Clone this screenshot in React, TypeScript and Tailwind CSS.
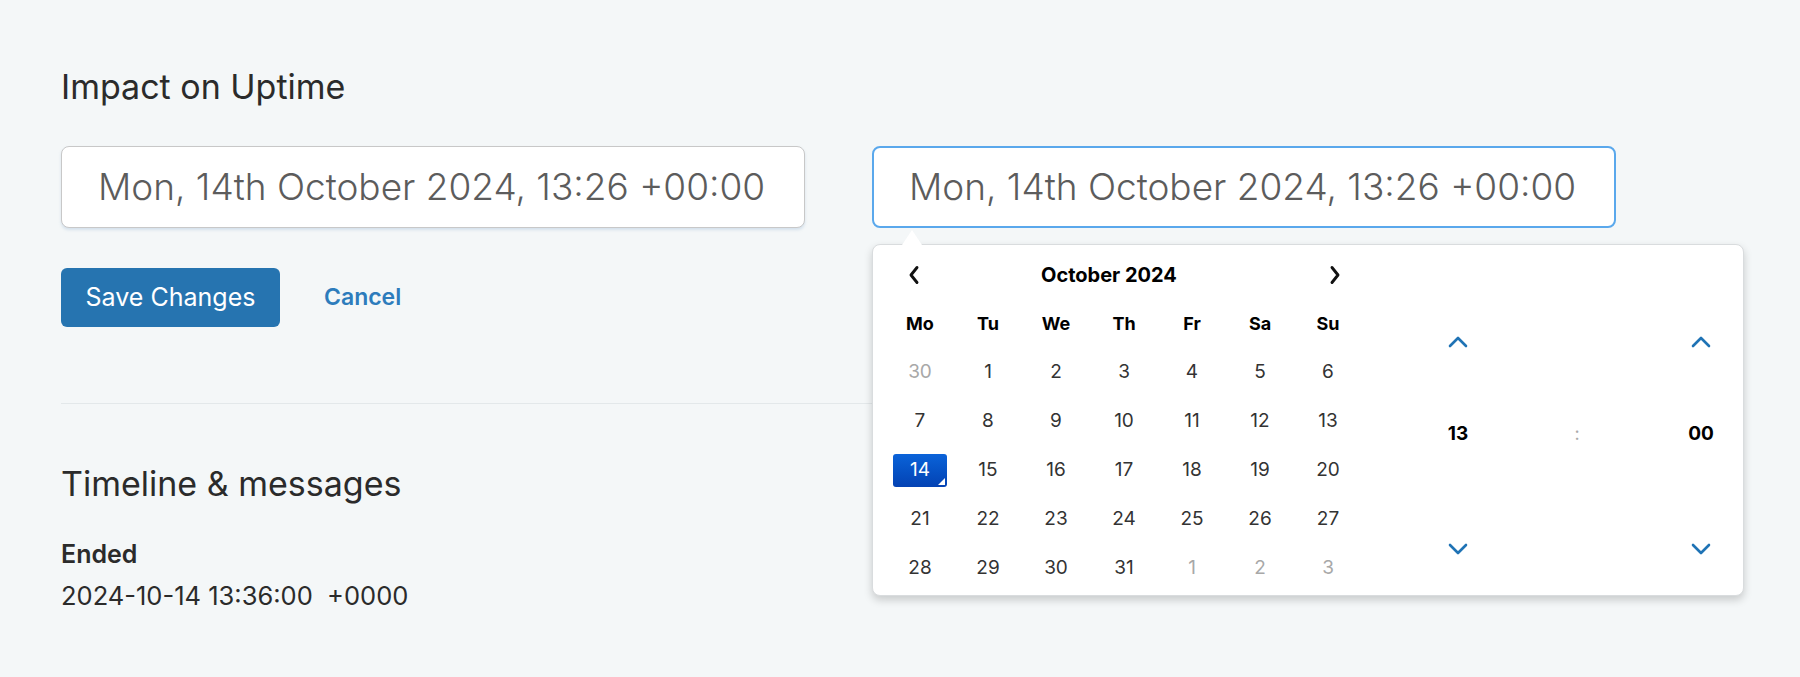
const weekdays = ["Mo", "Tu", "We", "Th", "Fr", "Sa", "Su"];

type Day = { n: number; muted?: boolean; selected?: boolean };

const weeks: Day[][] = [
  [{ n: 30, muted: true }, { n: 1 }, { n: 2 }, { n: 3 }, { n: 4 }, { n: 5 }, { n: 6 }],
  [{ n: 7 }, { n: 8 }, { n: 9 }, { n: 10 }, { n: 11 }, { n: 12 }, { n: 13 }],
  [{ n: 14, selected: true }, { n: 15 }, { n: 16 }, { n: 17 }, { n: 18 }, { n: 19 }, { n: 20 }],
  [{ n: 21 }, { n: 22 }, { n: 23 }, { n: 24 }, { n: 25 }, { n: 26 }, { n: 27 }],
  [{ n: 28 }, { n: 29 }, { n: 30 }, { n: 31 }, { n: 1, muted: true }, { n: 2, muted: true }, { n: 3, muted: true }],
];

const VALUE = "Mon, 14th October 2024, 13:26 +00:00";

function NavChevron({ dir }: { dir: "left" | "right" }) {
  return (
    <svg width="12" height="20" viewBox="0 0 12 20" fill="none">
      <path
        d={dir === "left" ? "M9 2.5 L3 10 L9 17.5" : "M3 2.5 L9 10 L3 17.5"}
        stroke="#111"
        strokeWidth="2.9"
        strokeLinecap="round"
        strokeLinejoin="round"
      />
    </svg>
  );
}

function TimeChevron({ dir }: { dir: "up" | "down" }) {
  return (
    <svg width="22" height="14" viewBox="0 0 22 14" fill="none">
      <path
        d={dir === "up" ? "M3 11 L11 3 L19 11" : "M3 3 L11 11 L19 3"}
        stroke="#1f73b5"
        strokeWidth="2.6"
        strokeLinecap="round"
        strokeLinejoin="round"
      />
    </svg>
  );
}

function TimeColumn({ value }: { value: string }) {
  return (
    <div className="flex w-[60px] flex-col items-center">
      <button className="flex h-[20px] items-center justify-center">
        <TimeChevron dir="up" />
      </button>
      <div className="mt-[71px] flex h-[22px] items-center text-[19px] font-bold text-black">{value}</div>
      <button className="mt-[94px] flex h-[20px] items-center justify-center">
        <TimeChevron dir="down" />
      </button>
    </div>
  );
}

function DatePopover() {
  return (
    <div className="absolute left-0 top-[98px] z-10 flex h-[352px] w-[872px] rounded-lg border border-[#d9dcde] bg-white shadow-[0_4px_8px_rgba(0,0,0,0.18)]">
      <div className="absolute left-[29px] top-[-15px] h-0 w-0 border-x-[10px] border-b-[15px] border-x-transparent border-b-white" />
      <div className="pl-[13px] pt-[8px]">
        <div className="flex h-[44px] w-[476px] items-center">
          <button className="ml-[22px] flex items-center">
            <NavChevron dir="left" />
          </button>
          <div className="ml-[121px] text-[20px] font-bold text-black">October 2024</div>
          <button className="ml-[152px] flex items-center">
            <NavChevron dir="right" />
          </button>
        </div>
        <div className="mt-[2px] grid w-[476px] grid-cols-7">
          {weekdays.map((d) => (
            <div key={d} className="flex h-[49px] items-center justify-center text-[18px] font-bold text-black">
              {d}
            </div>
          ))}
          {weeks.flat().map((d, i) => (
            <div key={i} className="flex h-[49px] items-center justify-center">
              {d.selected ? (
                <div className="relative flex h-[33px] w-[54px] items-center justify-center rounded-[3px] bg-gradient-to-b from-[#0b63d9] to-[#0442b3] text-[19px] text-white">
                  {d.n}
                  <div className="absolute bottom-[2px] right-[2px] h-0 w-0 border-b-[7px] border-l-[7px] border-b-white border-l-transparent" />
                </div>
              ) : (
                <span className={`text-[19px] ${d.muted ? "text-[#a8a8a8]" : "text-[#333]"}`}>{d.n}</span>
              )}
            </div>
          ))}
        </div>
      </div>
      <div className="flex pt-[87px]">
        <div className="ml-[66px]">
          <TimeColumn value="13" />
        </div>
        <div className="ml-[59px] flex w-[60px] justify-center pt-[91px] text-[18px] leading-[22px] text-[#aaa]">:</div>
        <div className="ml-[64px]">
          <TimeColumn value="00" />
        </div>
      </div>
    </div>
  );
}

export default function App() {
  return (
    <div className="min-h-[677px] bg-[#f4f7f8] px-[61px] pt-[68px] text-[#2b2b2b]" style={{ fontFamily: "Inter, 'Noto Sans', sans-serif" }}>
      <h2 className="text-[34px] leading-[38px] font-normal">Impact on Uptime</h2>
      <div className="mt-[40px] flex gap-[67px]">
        <div className="flex h-[82px] w-[744px] items-center whitespace-nowrap rounded-lg border border-[#c8c8c8] bg-white pl-[36px] text-[37px] font-light text-[#5c5c5c] shadow-[0_2px_3px_rgba(120,160,200,0.25)]">
          {VALUE}
        </div>
        <div className="relative">
          <div className="flex h-[82px] w-[744px] items-center whitespace-nowrap rounded-lg border-2 border-[#5aa8ec] bg-white pl-[35px] text-[37px] font-light text-[#5c5c5c]">
            {VALUE}
          </div>
          <DatePopover />
        </div>
      </div>
      <div className="mt-[40px] flex items-center">
        <button className="h-[59px] w-[219px] rounded-md bg-[#2674b0] text-[25px] text-white">Save Changes</button>
        <button className="ml-[44px] text-[23px] font-semibold text-[#2d7cbc]">Cancel</button>
      </div>
      <div className="mt-[76px] border-t border-[#e3e8ea]" />
      <h2 className="mt-[61px] text-[34px] leading-[38px] font-normal">Timeline &amp; messages</h2>
      <div className="mt-[36px] text-[25px] font-semibold leading-[30px]">Ended</div>
      <div className="mt-[12px] text-[25.5px] leading-[30px]">2024-10-14 13:36:00&nbsp;&nbsp;+0000</div>
    </div>
  );
}
